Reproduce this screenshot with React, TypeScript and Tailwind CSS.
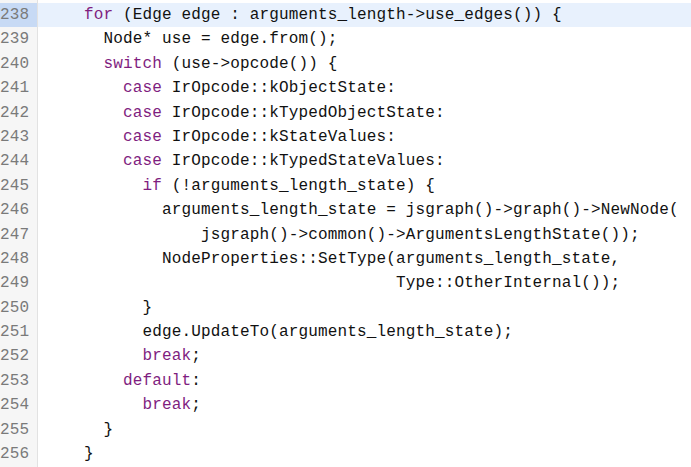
import React from "react";

type Seg = { t: string; k?: boolean };

const lines: { n: number; segs: Seg[] }[] = [
  { n: 238, segs: [{ t: "    " }, { t: "for", k: true }, { t: " (Edge edge : arguments_length->use_edges()) {" }] },
  { n: 239, segs: [{ t: "      Node* use = edge.from();" }] },
  { n: 240, segs: [{ t: "      " }, { t: "switch", k: true }, { t: " (use->opcode()) {" }] },
  { n: 241, segs: [{ t: "        " }, { t: "case", k: true }, { t: " IrOpcode::kObjectState:" }] },
  { n: 242, segs: [{ t: "        " }, { t: "case", k: true }, { t: " IrOpcode::kTypedObjectState:" }] },
  { n: 243, segs: [{ t: "        " }, { t: "case", k: true }, { t: " IrOpcode::kStateValues:" }] },
  { n: 244, segs: [{ t: "        " }, { t: "case", k: true }, { t: " IrOpcode::kTypedStateValues:" }] },
  { n: 245, segs: [{ t: "          " }, { t: "if", k: true }, { t: " (!arguments_length_state) {" }] },
  { n: 246, segs: [{ t: "            arguments_length_state = jsgraph()->graph()->NewNode(" }] },
  { n: 247, segs: [{ t: "                jsgraph()->common()->ArgumentsLengthState());" }] },
  { n: 248, segs: [{ t: "            NodeProperties::SetType(arguments_length_state," }] },
  { n: 249, segs: [{ t: "                                    Type::OtherInternal());" }] },
  { n: 250, segs: [{ t: "          }" }] },
  { n: 251, segs: [{ t: "          edge.UpdateTo(arguments_length_state);" }] },
  { n: 252, segs: [{ t: "          " }, { t: "break", k: true }, { t: ";" }] },
  { n: 253, segs: [{ t: "        " }, { t: "default", k: true }, { t: ":" }] },
  { n: 254, segs: [{ t: "          " }, { t: "break", k: true }, { t: ";" }] },
  { n: 255, segs: [{ t: "      }" }] },
  { n: 256, segs: [{ t: "    }" }] },
];

export default function App() {
  return (
    <div
      className="w-[691px] h-[467px] overflow-hidden bg-white flex flex-col text-[16px] tracking-[0.15px] leading-[24.4px] text-[#111]"
      style={{ fontFamily: '"Liberation Mono", "DejaVu Sans Mono", monospace' }}
    >
      <div className="flex h-[3px]">
        <div className="w-[38px] shrink-0 bg-[#f6f6f6] border-r border-[#e2e2e2]" />
        <div className="flex-1" />
      </div>
      {lines.map((l, i) => {
        const hl = i === 0;
        return (
          <div key={l.n} className={`flex h-[24.4px] ${hl ? "bg-[#e8f1fd]" : ""}`}>
            <div
              className={`w-[38px] shrink-0 border-r border-[#e2e2e2] text-right pr-[8px] text-[#7a7a7a] ${
                hl ? "bg-[#c7daf5]" : "bg-[#f6f6f6]"
              }`}
            >
              {l.n}
            </div>
            <div className="pl-[7px] whitespace-pre">
              {l.segs.map((s, j) =>
                s.k ? (
                  <span key={j} className="text-[#7f1e7f]">
                    {s.t}
                  </span>
                ) : (
                  <span key={j}>{s.t}</span>
                )
              )}
            </div>
          </div>
        );
      })}
      <div className="flex flex-1">
        <div className="w-[38px] shrink-0 bg-[#f6f6f6] border-r border-[#e2e2e2]" />
        <div className="flex-1" />
      </div>
    </div>
  );
}
